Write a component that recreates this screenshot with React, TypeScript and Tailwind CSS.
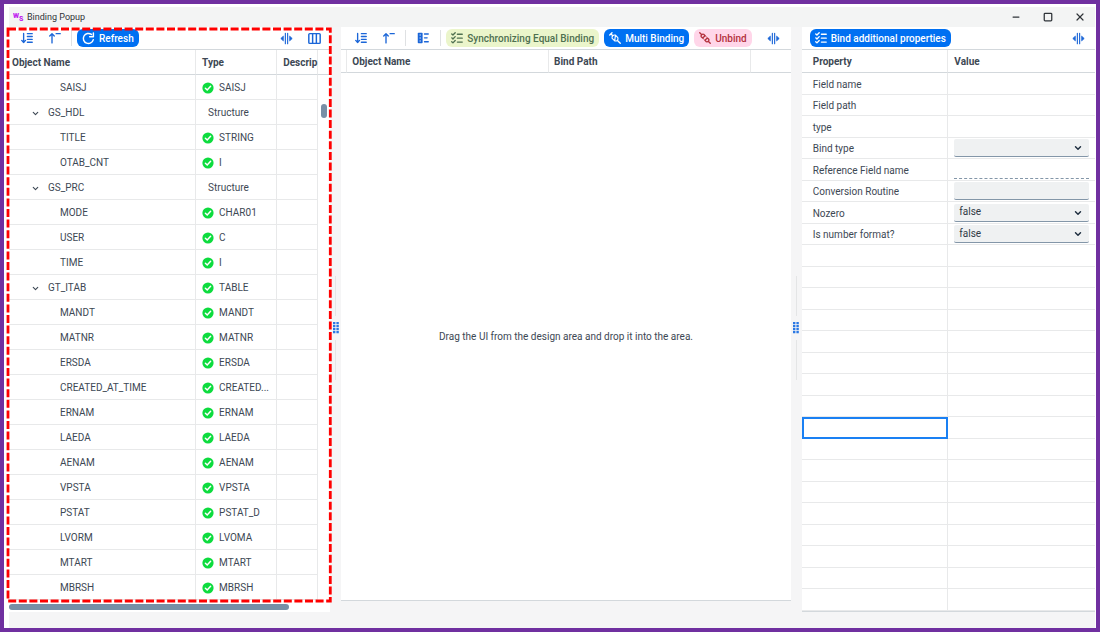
import type { ReactNode } from "react";
import { ChevronDown, Minus, Square, X } from "lucide-react";

type FieldRow = { name: string; type: string; parent?: boolean; plain?: boolean };

const fields: FieldRow[] = [
  { name: "SAISJ", type: "SAISJ" },
  { name: "GS_HDL", type: "Structure", parent: true, plain: true },
  { name: "TITLE", type: "STRING" },
  { name: "OTAB_CNT", type: "I" },
  { name: "GS_PRC", type: "Structure", parent: true, plain: true },
  { name: "MODE", type: "CHAR01" },
  { name: "USER", type: "C" },
  { name: "TIME", type: "I" },
  { name: "GT_ITAB", type: "TABLE", parent: true },
  { name: "MANDT", type: "MANDT" },
  { name: "MATNR", type: "MATNR" },
  { name: "ERSDA", type: "ERSDA" },
  { name: "CREATED_AT_TIME", type: "CREATED..." },
  { name: "ERNAM", type: "ERNAM" },
  { name: "LAEDA", type: "LAEDA" },
  { name: "AENAM", type: "AENAM" },
  { name: "VPSTA", type: "VPSTA" },
  { name: "PSTAT", type: "PSTAT_D" },
  { name: "LVORM", type: "LVOMA" },
  { name: "MTART", type: "MTART" },
  { name: "MBRSH", type: "MBRSH" },
];

type Property = { name: string; control?: "select" | "input" | "dashed"; value?: string };

const properties: Property[] = [
  { name: "Field name" },
  { name: "Field path" },
  { name: "type" },
  { name: "Bind type", control: "select", value: "" },
  { name: "Reference Field name", control: "dashed" },
  { name: "Conversion Routine", control: "input" },
  { name: "Nozero", control: "select", value: "false" },
  { name: "Is number format?", control: "select", value: "false" },
];

const PROPERTY_ROWS = 25;
const FOCUSED_ROW = 16;

function Icon({ children, className = "size-3" }: { children: ReactNode; className?: string }) {
  return (
    <svg
      viewBox="0 0 16 16"
      className={`shrink-0 ${className}`}
      fill="none"
      stroke="currentColor"
      strokeWidth="1.8"
      strokeLinecap="round"
      strokeLinejoin="round"
      aria-hidden="true"
    >
      {children}
    </svg>
  );
}

const ExpandIcon = () => (
  <Icon>
    <path d="M3.5 2v12M1 11.2l2.5 2.8L6 11.2M8.5 2.2H15M8.5 6H15M8.5 9.8H15M8.5 13.6H15" />
  </Icon>
);

const CollapseIcon = () => (
  <Icon>
    <path d="M4 14.5V2.5M1 5.4L4 2.2l3 3.2M9.5 2.2H15" />
  </Icon>
);

const LegendIcon = () => (
  <Icon>
    <rect x="1" y="1" width="6.5" height="14" rx="1" fill="currentColor" stroke="none" />
    <path d="M3.8 4h1M3.8 8h1M3.8 12h1" stroke="#fff" strokeWidth="1" />
    <path d="M10 2.6H15M10 7.8H13.5M10 13H15" />
  </Icon>
);

const ResizeIcon = () => (
  <Icon className="size-[13px]">
    <path d="M6.6 1.5v13M9.4 1.5v13" strokeWidth="1.4" />
    <path d="M3.8 5.4L1 8l2.8 2.6zM12.2 5.4L15 8l-2.8 2.6z" strokeWidth="1" fill="currentColor" />
  </Icon>
);

const ColumnsIcon = () => (
  <Icon className="size-[13px]">
    <rect x="1" y="2" width="14" height="12" rx="1.2" />
    <path d="M5.7 2v12M10.3 2v12" />
  </Icon>
);

const RefreshIcon = () => (
  <Icon className="size-[13px]">
    <path d="M13.9 9.4A6.2 6.2 0 1 1 11.6 3" strokeWidth="1.8" />
    <path d="M14 1.2v4.6H9.4" strokeWidth="1.8" />
  </Icon>
);

const ChecklistIcon = () => (
  <Icon>
    <path d="M1 2.6l1.6 1.5L5.6 1M1 7.8l1.6 1.5 3-3.1M1 13l1.6 1.5 3-3.1M8.5 3H15M8.5 8.2H15M8.5 13.4H15" />
  </Icon>
);

const BindIcon = () => (
  <Icon>
    <path d="M1 4L4 1M2.6 2.6l2.2 2.2M11.6 11.6L15 15" />
    <path d="M4.2 8.6C3.2 5.8 5.8 3.2 8.6 4.2l3.2 3.4c1 2.6-1.6 5.2-4.2 4.2zM8.6 4.2l-1 7.6" strokeWidth="1.5" />
  </Icon>
);

const UnbindIcon = () => (
  <Icon>
    <path d="M1 1l2 2M3 6.2c-.9-1.8 1.3-4 3.2-3.2l1.9 1.9-3.2 3.2zM13 13l2 2M13 9.8c.9 1.8-1.3 4-3.2 3.2l-1.9-1.9 3.2-3.2z" />
    <path d="M5.5 8.6l1.3 1.2M8.8 5.5L10 6.6" strokeWidth="1.2" />
  </Icon>
);

const SuccessIcon = () => (
  <svg viewBox="0 0 12 12" className="size-3 shrink-0" aria-hidden="true">
    <circle cx="6" cy="6" r="5.6" fill="#0ddc3e" />
    <path d="M3.4 6.3l1.8 1.7 3.4-3.7" fill="none" stroke="#fff" strokeWidth="1.5" strokeLinecap="round" />
  </svg>
);

function ToolButton({ label, children }: { label: string; children: ReactNode }) {
  return (
    <button type="button" aria-label={label} className="flex w-7 items-center justify-center text-[#1b66d8]">
      {children}
    </button>
  );
}

function PillButton({ className, icon, children }: { className: string; icon: ReactNode; children: ReactNode }) {
  return (
    <button
      type="button"
      className={`flex h-[18px] items-center gap-1 rounded-md px-[5px] text-[10px] font-medium whitespace-nowrap ${className}`}
    >
      {icon}
      <span className="pt-px">{children}</span>
    </button>
  );
}

const Separator = () => <span className="h-4 w-px bg-[#dfe1e3]" />;

function Toolbar({ children }: { children: ReactNode }) {
  return <div className="flex h-[23px] shrink-0 items-center border-b border-[#d3d8dc]">{children}</div>;
}

function Splitter() {
  return (
    <div className="flex w-[11px] shrink-0 flex-col items-center justify-center gap-1.5">
      <span className="h-10 w-px bg-[#e4e5e6]" />
      <svg viewBox="0 0 6 12" className="h-3 w-1.5 text-[#2a78e4]" fill="currentColor" aria-hidden="true">
        {[0, 3, 6, 9].map((y) => (
          <path key={y} d={`M0 ${y}h2.4v2.2h-2.4zM3.4 ${y}h2.4v2.2h-2.4z`} />
        ))}
      </svg>
      <span className="h-10 w-px bg-[#e4e5e6]" />
    </div>
  );
}

function TitleBar() {
  return (
    <header className="flex h-5 shrink-0 items-center bg-[#f3f4f4] pr-[9px] pl-1 text-[9px] text-[#2f3338]">
      <svg viewBox="0 0 12 12" className="mr-0.5 size-3" fill="#c026f0" aria-hidden="true">
        <text x="0" y="7" fontFamily="Roboto, sans-serif" fontSize="7" fontWeight="900">
          W<tspan dy="3">S</tspan>
        </text>
      </svg>
      <h1>Binding Popup</h1>
      <div className="ml-auto flex gap-5">
        <button type="button" aria-label="Minimize" className="flex size-3 items-center justify-center">
          <Minus className="size-2.5" strokeWidth={3} />
        </button>
        <button type="button" aria-label="Maximize" className="flex size-3 items-center justify-center">
          <Square className="size-2.5" strokeWidth={3} />
        </button>
        <button type="button" aria-label="Close" className="flex size-3 items-center justify-center">
          <X className="size-3" strokeWidth={2.4} />
        </button>
      </div>
    </header>
  );
}

function ObjectPanel() {
  return (
    <section className="relative mb-4 flex min-w-0 flex-[321_1_0%] flex-col bg-white">
      <Toolbar>
        <div className="flex items-center pl-1">
          <ToolButton label="Expand all"><ExpandIcon /></ToolButton>
          <ToolButton label="Collapse all"><CollapseIcon /></ToolButton>
        </div>
        <div className="flex items-center gap-[5px] pl-0.5">
          <Separator />
          <PillButton className="bg-[#0070f2] text-white" icon={<RefreshIcon />}>Refresh</PillButton>
        </div>
        <div className="ml-auto flex items-center pr-0.5">
          <ToolButton label="Resize columns"><ResizeIcon /></ToolButton>
          <ToolButton label="Choose columns"><ColumnsIcon /></ToolButton>
        </div>
      </Toolbar>
      <div className="flex flex-1">
        <div className="min-w-0 flex-1">
          <table className="w-full table-fixed border-separate border-spacing-0">
            <colgroup>
              <col className="w-[60.5%]" />
              <col className="w-[26.2%]" />
              <col />
            </colgroup>
            <thead>
              <tr className="h-[25px] text-left">
                <th className="border-r border-b border-r-[#e8e9ea] border-b-[#d3d8dc] p-0 pt-0.5 pl-[3px]">
                  Object Name
                </th>
                <th className="border-r border-b border-r-[#e8e9ea] border-b-[#d3d8dc] p-0 pt-0.5 pl-1.5">Type</th>
                <th className="border-r border-b border-r-[#e8e9ea] border-b-[#d3d8dc] p-0 pt-0.5 pl-1.5">
                  Descrip
                </th>
              </tr>
            </thead>
            <tbody>
              {fields.map((f) => (
                <tr key={f.name} className="h-[25px]">
                  <td className="border-r border-b border-[#e8e9ea] p-0 pt-0.5">
                    {f.parent ? (
                      <button type="button" aria-expanded="true" className="flex items-center gap-2 pl-[22px]">
                        <ChevronDown className="size-[9px]" strokeWidth={3} />
                        {f.name}
                      </button>
                    ) : (
                      <span className="block pl-[51px]">{f.name}</span>
                    )}
                  </td>
                  <td className="border-r border-b border-[#e8e9ea] p-0 pt-0.5 pl-1.5">
                    {f.plain ? (
                      <span className="block pl-1.5">{f.type}</span>
                    ) : (
                      <div className="flex items-center gap-[5px]">
                        <SuccessIcon />
                        <span>{f.type}</span>
                      </div>
                    )}
                  </td>
                  <td className="border-r border-b border-[#e8e9ea] p-0" />
                </tr>
              ))}
            </tbody>
          </table>
        </div>
        <div className="flex w-3 shrink-0 flex-col">
          <div className="h-[25px] border-b border-[#d3d8dc]" />
          <div className="mt-[29px] ml-[3px] h-3.5 w-1.5 rounded-full bg-[#788fa6]" />
        </div>
      </div>
      <div className="h-3 pt-1">
        <div className="h-1.5 w-[87%] rounded-full bg-[#788fa6]" />
      </div>
      <div className="pointer-events-none absolute top-[2px] right-0 bottom-[11px] -left-px">
        <svg className="block h-full w-full overflow-visible" aria-hidden="true">
          <rect width="100%" height="100%" fill="none" stroke="#ff0000" strokeWidth="2.8" strokeDasharray="8 2.6" />
        </svg>
      </div>
    </section>
  );
}

function BindingPanel() {
  return (
    <section className="mb-[27px] flex min-w-0 flex-[449_1_0%] flex-col border-b border-[#d3d8dc] bg-white">
      <Toolbar>
        <div className="flex items-center pl-1.5">
          <ToolButton label="Expand all"><ExpandIcon /></ToolButton>
          <ToolButton label="Collapse all"><CollapseIcon /></ToolButton>
        </div>
        <div className="flex items-center gap-[3px] pl-0.5">
          <Separator />
          <ToolButton label="Legend"><LegendIcon /></ToolButton>
          <Separator />
        </div>
        <div className="flex items-center gap-[5px] pl-[5px]">
          <PillButton className="bg-[#ebf5cb] text-[#4f7050]" icon={<ChecklistIcon />}>
            Synchronizing Equal Binding
          </PillButton>
          <PillButton className="bg-[#0070f2] text-white" icon={<BindIcon />}>Multi Binding</PillButton>
          <PillButton className="bg-[#ffd6e9] text-[#b3303c]" icon={<UnbindIcon />}>Unbind</PillButton>
        </div>
        <div className="ml-auto flex pr-[3px]">
          <ToolButton label="Resize columns"><ResizeIcon /></ToolButton>
        </div>
      </Toolbar>
      <table className="w-full table-fixed border-separate border-spacing-0">
        <colgroup>
          <col className="w-1.5" />
          <col />
          <col />
          <col className="w-10" />
        </colgroup>
        <thead>
          <tr className="h-[23px] text-left">
            <td className="border-r border-b border-r-[#e8e9ea] border-b-[#d3d8dc] p-0" />
            <th className="border-r border-b border-r-[#e8e9ea] border-b-[#d3d8dc] p-0 pt-0.5 pl-[5px]">
              Object Name
            </th>
            <th className="border-r border-b border-r-[#e8e9ea] border-b-[#d3d8dc] p-0 pt-0.5 pl-[5px]">
              Bind Path
            </th>
            <td className="border-b border-[#d3d8dc] p-0" />
          </tr>
        </thead>
      </table>
      <div className="flex flex-1 items-center justify-center">
        <p>Drag the UI from the design area and drop it into the area.</p>
      </div>
    </section>
  );
}

function PropertyControl({ property }: { property: Property }) {
  if (property.control === "select") {
    return (
      <div className="relative">
        <select
          aria-label={property.name}
          defaultValue={property.value}
          className="block h-[18px] w-full appearance-none rounded-xs border-b border-[#8396a8] bg-[#eff1f2] pr-5 pl-[5px] text-[#2f3a46]"
        >
          <option value=""></option>
          <option value="false">false</option>
          <option value="true">true</option>
        </select>
        <ChevronDown className="pointer-events-none absolute top-1 right-1.5 size-2.5 text-[#1d2d3e]" strokeWidth={3.4} />
      </div>
    );
  }
  if (property.control === "input") {
    return (
      <input
        type="text"
        aria-label={property.name}
        className="block h-[18px] w-full rounded-xs border-b border-[#8396a8] bg-[#eff1f2] px-[5px]"
      />
    );
  }
  if (property.control === "dashed") {
    return (
      <input
        type="text"
        readOnly
        aria-label={property.name}
        className="block h-[18px] w-full border-b border-dashed border-[#8396a8] px-[5px]"
      />
    );
  }
  return null;
}

function PropertyPanel() {
  const rows: (Property | undefined)[] = Array.from({ length: PROPERTY_ROWS }, (_, i) => properties[i]);
  return (
    <section className="mb-4 flex min-w-0 flex-[293_1_0%] flex-col border-b border-[#d3d8dc] bg-white">
      <Toolbar>
        <div className="pl-2">
          <PillButton className="bg-[#0070f2] text-white" icon={<ChecklistIcon />}>
            Bind additional properties
          </PillButton>
        </div>
        <div className="ml-auto flex pr-[3px]">
          <ToolButton label="Resize columns"><ResizeIcon /></ToolButton>
        </div>
      </Toolbar>
      <table className="w-full flex-1 table-fixed border-separate border-spacing-0">
        <thead>
          <tr className="h-[23px] text-left">
            <th className="border-r border-b border-r-[#e8e9ea] border-b-[#d3d8dc] p-0 pt-0.5 pl-[11px]">Property</th>
            <th className="border-b border-[#d3d8dc] p-0 pt-0.5 pl-1.5">Value</th>
          </tr>
        </thead>
        <tbody>
          {rows.map((p, i) => (
            <tr key={i} className="odd:h-[22px] even:h-[21px]">
              <td
                className={
                  i === FOCUSED_ROW
                    ? "border-r border-b border-[#e8e9ea] p-0 outline-2 -outline-offset-2 outline-[#1a80f3]"
                    : "border-r border-b border-[#e8e9ea] p-0 pt-0.5 pl-[11px]"
                }
              >
                {p?.name}
              </td>
              <td className="border-b border-[#e8e9ea] p-0 px-1.5">{p && <PropertyControl property={p} />}</td>
            </tr>
          ))}
        </tbody>
      </table>
    </section>
  );
}

export default function App() {
  return (
    <div className="flex min-h-screen flex-col border-4 border-[#7030a0] bg-white pt-[3px] pr-px pl-[5px] font-['Roboto',sans-serif] text-[10px] leading-4 text-[#3d4854]">
      <TitleBar />
      <main className="flex flex-1 bg-[#f5f5f6]">
        <ObjectPanel />
        <Splitter />
        <BindingPanel />
        <Splitter />
        <PropertyPanel />
      </main>
    </div>
  );
}
